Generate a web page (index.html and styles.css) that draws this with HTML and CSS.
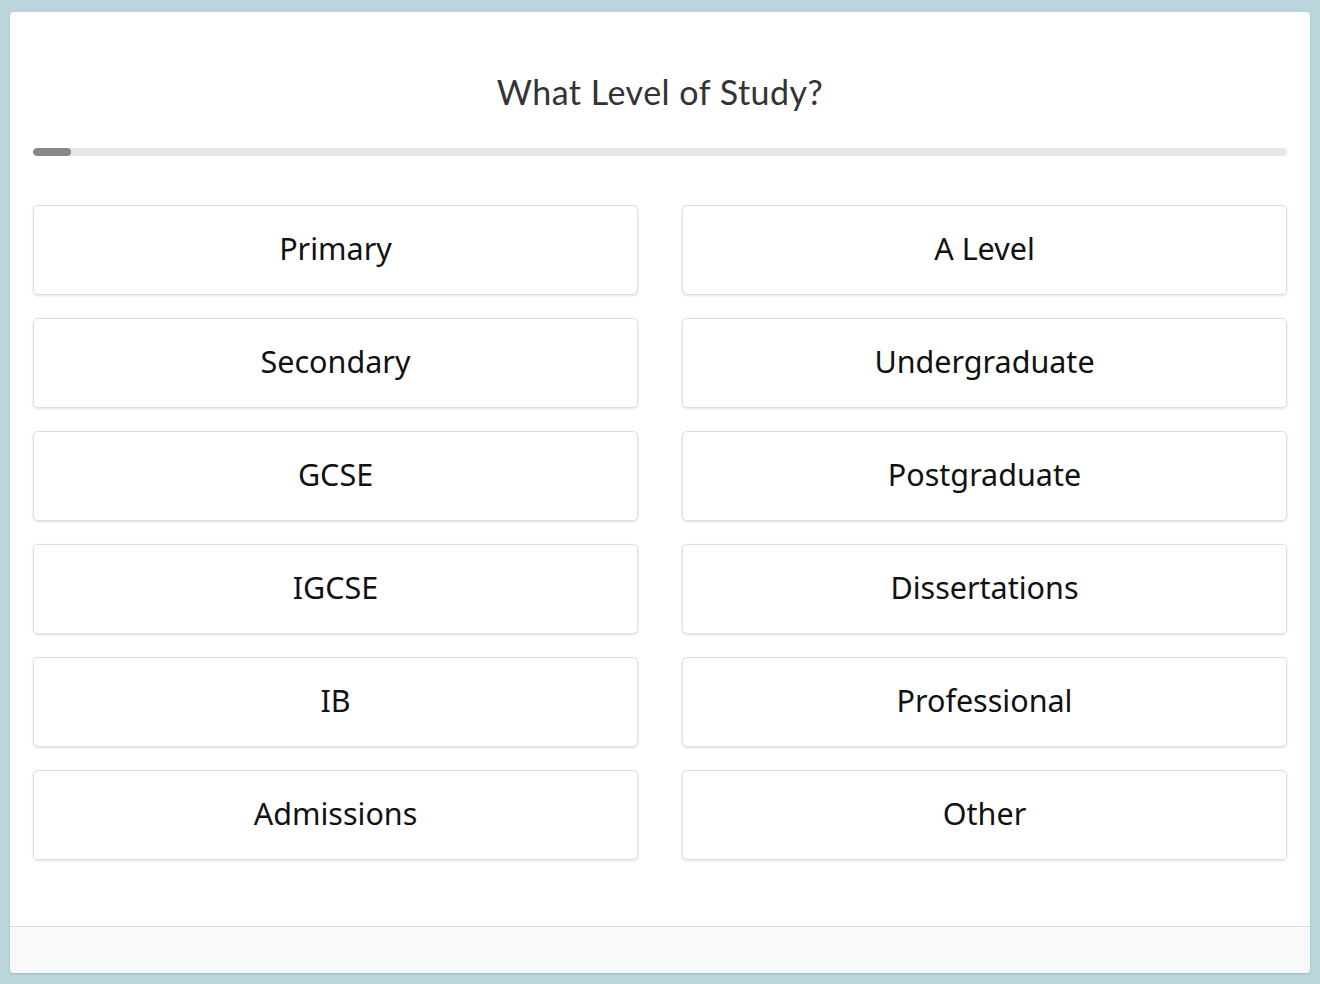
FILE: index.html
```html
<!DOCTYPE html>
<html>
<head>
<meta charset="utf-8">
<link rel="stylesheet" href="styles.css">
</head>
<body>
<div class="card">
  <div class="content">
    <h1 class="title">What Level of Study?</h1>
    <div class="progress"><div class="progress-fill" style="width:3%"></div></div>
    <div class="options">
      <button class="option">Primary</button>
      <button class="option">A Level</button>
      <button class="option">Secondary</button>
      <button class="option">Undergraduate</button>
      <button class="option">GCSE</button>
      <button class="option">Postgraduate</button>
      <button class="option">IGCSE</button>
      <button class="option">Dissertations</button>
      <button class="option">IB</button>
      <button class="option">Professional</button>
      <button class="option">Admissions</button>
      <button class="option">Other</button>
    </div>
  </div>
  <div class="footer"></div>
</div>
</body>
</html>
```
FILE: styles.css
```css
html, body {
  margin: 0;
  padding: 0;
  height: 100%;
}
body {
  background: #bad5dc;
  padding: 12px 10px 11px 10px;
  box-sizing: border-box;
  font-family: "Noto Sans", "Open Sans", sans-serif;
}
.card {
  background: #fff;
  border-radius: 4px;
  height: 961px;
  display: flex;
  flex-direction: column;
  box-shadow: 0 1px 2px rgba(0,0,0,0.15);
  overflow: hidden;
}
.content {
  flex: 1;
  padding: 0 23px;
}
.title {
  margin: 0;
  padding-top: 60px;
  height: 40px;
  padding-bottom: 36px;
  text-align: center;
  font-family: "Lato", "Noto Sans", sans-serif;
  font-weight: 400;
  font-size: 34px;
  line-height: 40px;
  color: #333;
  letter-spacing: 0.5px;
}
.progress {
  height: 8px;
  background: #e6e6e6;
  border-radius: 4px;
  overflow: hidden;
}
.progress-fill {
  height: 100%;
  background: #888;
  border-radius: 4px;
}
.options {
  margin-top: 49px;
  display: grid;
  grid-template-columns: 1fr 1fr;
  column-gap: 44px;
  row-gap: 23px;
}
.option {
  height: 90px;
  background: #fff;
  border: 1px solid #dedede;
  border-radius: 5px;
  box-shadow: 0 1px 3px rgba(0,0,0,0.12);
  font-family: "Noto Sans", "Open Sans", sans-serif;
  font-size: 30.5px;
  line-height: 1;
  color: #111;
  padding: 0 0 3px 0;
  cursor: pointer;
}
.footer {
  height: 46px;
  background: #f8f9fb;
  border-top: 1px solid #dcdcdc;
}
```
